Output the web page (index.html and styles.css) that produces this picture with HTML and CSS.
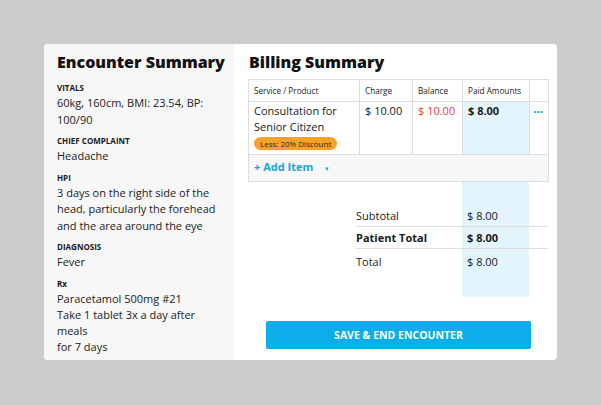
FILE: index.html
```html
<!DOCTYPE html>
<html>
<head>
<meta charset="utf-8">
<link rel="stylesheet" href="styles.css">
</head>
<body>
<div class="card">
  <aside class="encounter">
    <h1 class="title">Encounter Summary</h1>
    <div class="field">
      <div class="label">VITALS</div>
      <div class="value">60kg, 160cm, BMI: 23.54, BP: 100/90</div>
    </div>
    <div class="field">
      <div class="label">CHIEF COMPLAINT</div>
      <div class="value">Headache</div>
    </div>
    <div class="field">
      <div class="label">HPI</div>
      <div class="value">3 days on the right side of the head, particularly the forehead and the area around the eye</div>
    </div>
    <div class="field">
      <div class="label">DIAGNOSIS</div>
      <div class="value">Fever</div>
    </div>
    <div class="field">
      <div class="label">Rx</div>
      <div class="value rx">Paracetamol 500mg #21<br>Take 1 tablet 3x a day after meals<br>for 7 days</div>
    </div>
  </aside>
  <main class="billing">
    <h1 class="title">Billing Summary</h1>
    <table class="items">
      <colgroup>
        <col class="c-service"><col class="c-charge"><col class="c-balance"><col class="c-paid"><col class="c-more">
      </colgroup>
      <thead>
        <tr><th>Service / Product</th><th>Charge</th><th>Balance</th><th>Paid Amounts</th><th></th></tr>
      </thead>
      <tbody>
        <tr class="item">
          <td>Consultation for Senior Citizen<span class="badge">Less: 20% Discount</span></td>
          <td>$ 10.00</td>
          <td class="due">$ 10.00</td>
          <td class="paid">$ 8.00</td>
          <td class="more">&middot;&middot;&middot;</td>
        </tr>
        <tr class="add">
          <td colspan="5"><span class="add-link">+ Add Item</span><span class="caret">&#9662;</span></td>
        </tr>
      </tbody>
    </table>
    <div class="totals">
      <div class="row"><span>Subtotal</span><span>$ 8.00</span></div>
      <div class="row strong"><span>Patient Total</span><span>$ 8.00</span></div>
      <div class="row"><span>Total</span><span>$ 8.00</span></div>
    </div>
    <div class="actions">
      <button class="save">SAVE &amp; END ENCOUNTER</button>
    </div>
  </main>
</div>
</body>
</html>
```
FILE: styles.css
```css
* { box-sizing: border-box; }
body {
  margin: 0;
  background: #cccccc;
  font-family: "Open Sans", "Liberation Sans", sans-serif;
  color: #111;
  padding: 44px;
}
.card {
  width: 513px;
  height: 316px;
  display: flex;
  background: #fff;
  border-radius: 4px;
  overflow: hidden;
}
.encounter {
  width: 190px;
  flex: none;
  background: #f7f7f7;
  padding: 8px 6px 0 13px;
}
.title {
  margin: 0;
  font-size: 16px;
  font-weight: 800;
  line-height: 20px;
  white-space: nowrap;
}
.encounter .title { margin-bottom: 10px; }
.field { margin-bottom: 7px; }
.label {
  font-size: 8px;
  font-weight: 700;
  line-height: 12px;
  margin-bottom: 1px;
  color: #1a1a1a;
}
.value {
  font-size: 11px;
  line-height: 16.5px;
  color: #222;
  padding-right: 4px;
}
.value.rx { line-height: 16px; }
.billing {
  flex: 1;
  padding: 8px 9px 0 14px;
}
.billing .title { margin-bottom: 7px; padding-left: 1px; }
.items {
  width: 300px;
  border-collapse: collapse;
  table-layout: fixed;
  font-size: 11px;
  color: #1a1a1a;
}
.c-service { width: 111px; }
.c-charge { width: 53px; }
.c-balance { width: 50px; }
.c-paid { width: 67px; }
.c-more { width: 19px; }
.items th, .items td {
  border: 1px solid #dddddd;
  text-align: left;
  vertical-align: top;
  padding: 0 5px;
}
.items th {
  font-size: 8.2px;
  font-weight: 400;
  height: 22px;
  vertical-align: middle;
  color: #222;
}
.item td {
  height: 53px;
  padding-top: 1px;
  line-height: 16px;
}
.badge {
  display: inline-block;
  background: #f8a12a;
  color: #2a2a2a;
  font-size: 8px;
  line-height: 13px;
  padding: 0 6px;
  border-radius: 7px;
  margin-top: 2px;
  white-space: nowrap;
}
.due { color: #e0404a; }
.paid { background: #e3f4fc; font-weight: 700; }
.items td.more {
  color: #1aa3de;
  font-weight: 700;
  font-size: 13px;
  line-height: 14px;
  padding: 2px 0 0 3px;
  letter-spacing: -0.5px;
}
.add td {
  background: #f7f7f7;
  height: 27px;
  vertical-align: middle;
  padding-bottom: 3px;
}
.add-link { color: #1aa3de; font-weight: 700; }
.caret { color: #1aa3de; font-size: 7px; margin-left: 12px; }
.totals {
  width: 300px;
  height: 115px;
  padding: 22px 0 0 108px;
  background: linear-gradient(to right, transparent 214px, #e3f4fc 214px, #e3f4fc 281px, transparent 281px);
  font-size: 11px;
  color: #1a1a1a;
}
.row {
  display: grid;
  grid-template-columns: 111px 1fr;
  height: 22px;
  align-items: center;
}
.row + .row { border-top: 1px solid #dddddd; }
.row.strong { font-weight: 700; }
.row:last-child { height: 25px; }
.actions {
  padding: 24px 17px 0 18px;
  width: 300px;
}
.save {
  display: block;
  width: 100%;
  height: 28px;
  border: 0;
  border-radius: 2px;
  background: #0baee8;
  color: #fff;
  font-family: inherit;
  font-size: 10.5px;
  font-weight: 700;
}
```
